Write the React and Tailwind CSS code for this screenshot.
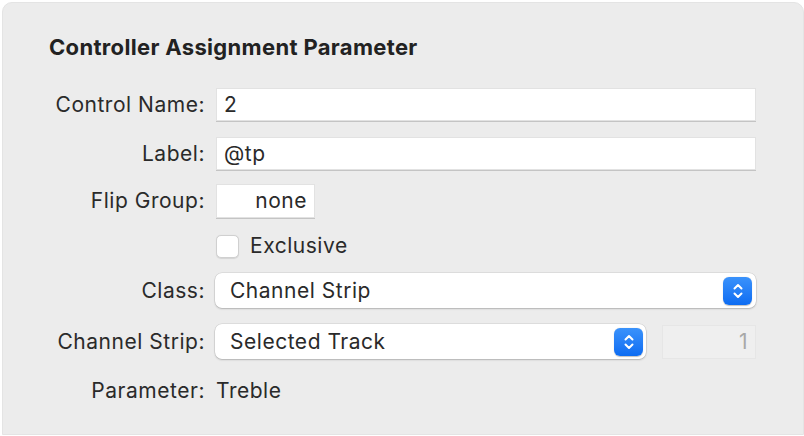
import React from 'react'

const font = { fontFamily: 'Inter, "Noto Sans", sans-serif' }

function Stepper() {
  return (
    <span className="flex h-[28px] w-[29px] items-center justify-center rounded-[6px] bg-gradient-to-b from-[#3a92fb] to-[#0c6cf2] shadow-[0_0.5px_1px_rgba(0,0,0,0.25)]">
      <svg width="14" height="20" viewBox="0 0 14 20" fill="none" stroke="white" strokeWidth="2" strokeLinecap="round" strokeLinejoin="round">
        <path d="M3.5 7.5 L7 4 L10.5 7.5" />
        <path d="M3.5 12.5 L7 16 L10.5 12.5" />
      </svg>
    </span>
  )
}

function Row({ label, className = '', children }) {
  return (
    <div className={`flex items-center ${className}`}>
      <div className="w-[157px] shrink-0 whitespace-nowrap pr-[1px] text-right">{label}</div>
      <div className="ml-[10px] flex flex-1 items-center">{children}</div>
    </div>
  )
}

const field = 'bg-white border border-[#e2e2e2] shadow-[0_1px_0_#c4c4c4] px-[7px] flex items-center'
const popup = 'bg-white rounded-[7px] shadow-[0_0_0_0.5px_rgba(0,0,0,0.12),0_1px_2px_rgba(0,0,0,0.2)] flex items-center justify-between pl-[15px] pr-[3px]'

export default function App() {
  return (
    <div className="h-[436px] w-[804px] overflow-hidden bg-white text-[21px] tracking-[0.025em] text-[#2a2a2a]" style={font}>
      <div className="ml-[2px] mt-[2px] h-[433px] w-[802px] rounded-t-[10px] border border-[#e4e4e4] bg-[#ececec] pl-[46px] pr-[47px]">
        <h1 className="mt-[31px] whitespace-nowrap text-[22px] font-bold leading-[26px] tracking-[0.015em] text-[#222]">Controller Assignment Parameter</h1>

        <Row label="Control Name:" className="mt-[28px] h-[33px]">
          <div className={`${field} h-[33px] flex-1`}>2</div>
        </Row>

        <Row label="Label:" className="mt-[16px] h-[33px]">
          <div className={`${field} h-[33px] flex-1`}>@tp</div>
        </Row>

        <Row label="Flip Group:" className="mt-[14px] h-[34px]">
          <div className={`${field} h-[34px] w-[99px] justify-end`}>none</div>
        </Row>

        <Row label="" className="mt-[16px] h-[24px]">
          <span className="h-[23px] w-[23px] rounded-[5px] border border-[#d0d0d0] bg-white shadow-[0_0.5px_1px_rgba(0,0,0,0.1)]" />
          <span className="ml-[11px]">Exclusive</span>
        </Row>

        <Row label="Class:" className="mt-[15px] h-[35px]">
          <div className={`${popup} -ml-[1px] h-[35px] flex-1 pr-[4px]`}>
            <span>Channel Strip</span>
            <Stepper />
          </div>
        </Row>

        <Row label="Channel Strip:" className="mt-[16px] h-[35px]">
          <div className={`${popup} -ml-[1px] h-[35px] w-[431px]`}>
            <span>Selected Track</span>
            <Stepper />
          </div>
          <div className="ml-[16px] flex h-[34px] flex-1 items-center justify-end border border-[#e6e6e6] bg-[#efefef] px-[7px] text-[#a8a8a8]">1</div>
        </Row>

        <Row label="Parameter:" className="mt-[20px] h-[24px]">
          <span>Treble</span>
        </Row>
      </div>
    </div>
  )
}
